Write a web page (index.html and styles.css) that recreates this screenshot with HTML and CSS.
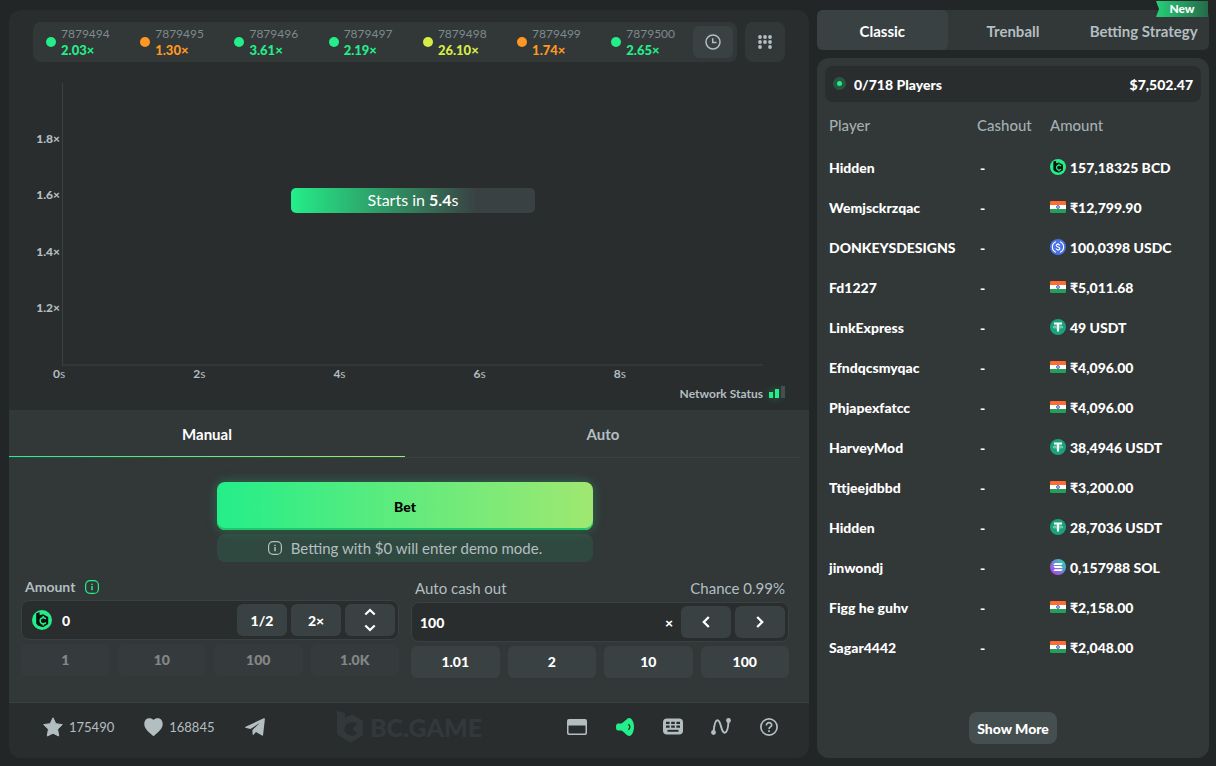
FILE: index.html
```html
<!DOCTYPE html>
<html lang="en">
<head>
<meta charset="utf-8">
<meta name="viewport" content="width=device-width, initial-scale=1">
<title>Crash - BC.GAME</title>
<link rel="stylesheet" href="styles.css">
</head>
<body>
<svg class="sprite" aria-hidden="true">
  <defs>
    <linearGradient id="solFill" x1="0" y1="1" x2="1" y2="0"><stop offset=".1" stop-color="#b83df0"/><stop offset=".5" stop-color="#6f83d8"/><stop offset=".95" stop-color="#1fe0a8"/></linearGradient>
  </defs>
  <symbol id="bcd" viewBox="0 0 20 20">
    <circle cx="10" cy="10" r="10" fill="#24ee89"/>
    <path fill="#0b1210" d="M4.200 3.200 7.600 2.300v3L11 4.300l5.200 2.800v7L11 17.200 5.800 15.400 4.200 13.500z"/>
    <path fill="none" stroke="#24ee89" stroke-width="1.500" d="M13.800 9a3.100 3.100 0 1 0 0 3.500M11.200 5.900v1.800M11.200 13.700v1.800"/>
  </symbol>
  <symbol id="inr" viewBox="0 0 16 12">
    <path fill="#ff6c2d" d="M0 1q0-1 1-1h14q1 0 1 1v3H0z"/><path fill="#fff" d="M0 4h16v4H0z"/><path fill="#249f58" d="M0 8h16v3q0 1-1 1H1q-1 0-1-1z"/>
    <circle cx="8" cy="6" r="1.500" fill="#a9b9f5" stroke="#3d57c9" stroke-width=".8"/>
  </symbol>
  <symbol id="usdc" viewBox="0 0 16 16">
    <circle cx="8" cy="8" r="8" fill="#4a72ea"/>
    <path fill="none" stroke="#fff" stroke-width="1.100" d="M6 2.700a5.700 5.700 0 0 0 0 10.600M10 2.700a5.700 5.700 0 0 1 0 10.600M9.900 6.500C9.700 5 6.200 4.900 6.200 6.600c0 1.700 3.700 1.100 3.700 2.900 0 1.700-3.700 1.600-3.900 0M8 4.300v1.100M8 10.700v1.100"/>
  </symbol>
  <symbol id="usdt" viewBox="0 0 16 16">
    <circle cx="8" cy="8" r="8" fill="#1ba27a"/>
    <path fill="#fff" d="M4 3.600h8v2H9.100v6.900H6.900V5.600H4z"/>
    <ellipse cx="8" cy="8" rx="4.800" ry="1" fill="none" stroke="#d8f2e9" stroke-width=".7"/>
  </symbol>
  <symbol id="sol" viewBox="0 0 16 16">
    <circle cx="8" cy="8" r="8" fill="url(#solFill)"/>
    <path fill="#fff" d="M4.800 4h8l-1.500 1.900h-8zM3.300 7.100h8L12.800 9h-8zM4.800 10.200h8l-1.500 1.900h-8z"/>
  </symbol>
  <symbol id="info" viewBox="0 0 14 14">
    <rect x=".6" y=".6" width="12.800" height="12.800" rx="4.500" fill="none" stroke="currentColor" stroke-width="1.200"/>
    <path fill="none" stroke="currentColor" stroke-width="1.500" d="M7 3.700v1.400M7 6.100v4.200"/>
  </symbol>
</svg>

<main class="page">
  <section class="game">
    <div class="stage">
      <div class="topbar">
        <div class="history">
          <div class="round green"><i class="dot"></i><span class="id">7879494</span><b class="rate">2.03×</b></div>
          <div class="round orange"><i class="dot"></i><span class="id">7879495</span><b class="rate">1.30×</b></div>
          <div class="round green"><i class="dot"></i><span class="id">7879496</span><b class="rate">3.61×</b></div>
          <div class="round green"><i class="dot"></i><span class="id">7879497</span><b class="rate">2.19×</b></div>
          <div class="round yellow"><i class="dot"></i><span class="id">7879498</span><b class="rate">26.10×</b></div>
          <div class="round orange"><i class="dot"></i><span class="id">7879499</span><b class="rate">1.74×</b></div>
          <div class="round latest green"><i class="dot"></i><span class="id">7879500</span><b class="rate">2.65×</b></div>
          <button class="clock" aria-label="History"><svg width="16" height="16" viewBox="0 0 16 16" fill="none" stroke="currentColor" stroke-width="1.500"><circle cx="8" cy="8" r="7"/><path d="M7.700 4.300v4.200h3.800"/></svg></button>
        </div>
        <button class="trends" aria-label="Trends"><svg width="14" height="14" viewBox="0 0 14 14" fill="currentColor"><circle cx="2" cy="2" r="1.900"/><circle cx="7" cy="2" r="1.900"/><circle cx="12" cy="2" r="1.900"/><circle cx="2" cy="7" r="1.900"/><circle cx="7" cy="7" r="1.900"/><circle cx="12" cy="7" r="1.900"/><circle cx="2" cy="12" r="1.900"/><circle cx="12" cy="12" r="1.900"/></svg></button>
      </div>
      <div class="chart">
        <div class="yaxis"><span>1.8×</span><span>1.6×</span><span>1.4×</span><span>1.2×</span></div>
        <div class="plot"><div class="countdown">Starts in <b>5.4</b>s</div></div>
      </div>
      <div class="xaxis"><span><b>0</b>s</span><span><b>2</b>s</span><span><b>4</b>s</span><span><b>6</b>s</span><span><b>8</b>s</span></div>
      <div class="network">Network Status<span class="bars"><i class="low"></i><i class="mid"></i><i class="high"></i></span></div>
    </div>

    <div class="controls">
      <div class="modes" role="tablist">
        <button class="mode active" role="tab" aria-selected="true">Manual</button>
        <button class="mode" role="tab" aria-selected="false">Auto</button>
      </div>
      <div class="action">
        <button class="bet">Bet</button>
        <p class="hint"><svg width="14" height="14"><use href="#info"/></svg>Betting with $0 will enter demo mode.</p>
      </div>
      <div class="fields">
        <div class="field">
          <div class="label strong"><label for="amount">Amount</label><svg class="tip" width="14" height="14"><use href="#info"/></svg></div>
          <div class="box">
            <svg class="coin" width="20" height="20"><use href="#bcd"/></svg>
            <input id="amount" type="text" value="0">
            <button class="key">1/2</button>
            <button class="key">2×</button>
            <button class="key icon" aria-label="Adjust amount"><svg width="12" height="24" viewBox="0 0 12 24" fill="none" stroke="currentColor" stroke-width="2.200"><path d="M1.300 6.500 6 2l4.700 4.500M1.300 17.500 6 22l4.700-4.500"/></svg></button>
          </div>
          <div class="quick">
            <button disabled>1</button><button disabled>10</button><button disabled>100</button><button disabled>1.0K</button>
          </div>
        </div>
        <div class="field">
          <div class="label tall"><label for="cashout">Auto cash out</label><span>Chance 0.99%</span></div>
          <div class="box">
            <input id="cashout" type="text" value="100">
            <span class="times">×</span>
            <button class="key icon" aria-label="Lower"><svg width="8" height="12" viewBox="0 0 8 12" fill="none" stroke="currentColor" stroke-width="2.300"><path d="M6.800 1 1.800 6l5 5"/></svg></button>
            <button class="key icon" aria-label="Higher"><svg width="8" height="12" viewBox="0 0 8 12" fill="none" stroke="currentColor" stroke-width="2.300"><path d="M1.200 1l5 5-5 5"/></svg></button>
          </div>
          <div class="quick">
            <button>1.01</button><button>2</button><button>10</button><button>100</button>
          </div>
        </div>
      </div>
    </div>

    <footer class="foot">
      <div class="social">
        <button class="stat"><svg width="20" height="20" viewBox="0 0 20 20" fill="currentColor" stroke="currentColor" stroke-linejoin="round"><path d="M10 .8l2.800 5.900 6.500.9-4.700 4.600 1.100 6.800L10 16.200 4.300 19l1.100-6.800L.7 7.600l6.500-.9z"/></svg>175490</button>
        <button class="stat"><svg width="19" height="18" viewBox="0 0 19 18" fill="currentColor"><path d="M9.500 2C7.300-.5.3-1 .3 6.300c0 5 5.700 8.500 8 11q1.200 1.200 2.400 0c2.300-2.500 8-6 8-11C18.700-1 11.700-.5 9.500 2z"/></svg>168845</button>
        <button class="stat" aria-label="Share"><svg width="20" height="18" viewBox="0 0 20 18" fill="currentColor"><path d="M0 9 18.800.3q1.200-.4 1.100.8L18.100 17q-.2 1-1.100.5L11 14l-2.500 2.800q-.8.500-.9-.6L7.400 12 15 4.800 5.500 11 .4 9.700z"/></svg></button>
      </div>
      <div class="brand"><svg width="28" height="32" viewBox="0 0 28 32" fill="currentColor"><path fill-rule="evenodd" d="M1 0l8 2v5l6-3q1-.4 2 0l8 4.500q2 1 2 3v11q0 2-2 3l-8 5q-2 1-4 0l-9-5q-3-1.500-3-4zM21 13c-4-4-12.500-1-12.500 5s8.500 9 12.500 4.500L16.500 18z"/></svg><span>BC.GAME</span></div>
      <div class="tools">
        <button class="tool" aria-label="Theatre mode"><svg width="20" height="16" viewBox="0 0 20 16"><path fill="currentColor" fill-rule="evenodd" d="M2 0h16q2 0 2 2v12q0 2-2 2H2q-2 0-2-2V2q0-2 2-2zM1.500 6.500v7q0 1 1 1h15q1 0 1-1v-7z"/></svg></button>
        <button class="tool on" aria-label="Sound"><svg width="20" height="18" viewBox="0 0 20 18"><path fill="currentColor" d="M3 5.500h3.500C9 4 10.500 1.800 12.700.4 17-1.500 19 5 19 9s-2 10.500-6.300 8.600C10.500 16.200 9 14 6.500 12.500H3Q1 12.500 1 9t2-3.500z"/><path fill="none" stroke="#292d2e" stroke-width="1.300" d="M13.400 6.300q3 2.700 0 5.400"/></svg></button>
        <button class="tool" aria-label="Hotkeys"><svg width="20" height="17" viewBox="0 0 20 17"><rect y=".5" width="20" height="16" rx="4" fill="currentColor"/><path fill="none" stroke="#292d2e" stroke-width="2.200" stroke-dasharray="3.600 1.600" d="M3 4.800h14M3 8.600h14"/><path stroke="#292d2e" stroke-width="2" d="M4.500 12.800h11"/></svg></button>
        <button class="tool" aria-label="Live stats"><svg width="20" height="17" viewBox="0 0 20 17"><g fill="currentColor"><circle cx="2.500" cy="14.500" r="2.400"/><circle cx="17.500" cy="2.500" r="2.400"/></g><path fill="none" stroke="currentColor" stroke-width="2" d="M2.500 14C3.200 7 4 2.300 6.400 2.300c4.100 0 3.200 12.500 7.200 12.500 3 0 3.700-6 3.900-12"/></svg></button>
        <button class="tool" aria-label="Help"><svg width="18" height="18" viewBox="0 0 18 18" fill="none" stroke="currentColor" stroke-width="1.700"><circle cx="9" cy="9" r="8.100"/><path d="M6.400 7.500C6.200 3.600 12 4 11.700 7.200c-.2 1.800-2.600 1.700-2.700 3.800M9 12.300v1.700"/></svg></button>
      </div>
    </footer>
  </section>

  <aside class="side">
    <div class="kinds" role="tablist">
      <button class="kind active" role="tab" aria-selected="true">Classic</button>
      <button class="kind" role="tab" aria-selected="false">Trenball</button>
      <button class="kind" role="tab" aria-selected="false">Betting Strategy</button>
      <span class="badge">New</span>
    </div>
    <div class="players">
      <div class="summary"><span class="live"></span><span>0/718 Players</span><span class="total">$7,502.47</span></div>
      <table class="bets">
        <thead><tr><th class="who">Player</th><th class="out">Cashout</th><th>Amount</th></tr></thead>
        <tbody>
          <tr><td>Hidden</td><td class="dash">-</td><td><span class="sum"><svg width="16" height="16"><use href="#bcd"/></svg>157,18325 BCD</span></td></tr>
          <tr><td>Wemjsckrzqac</td><td class="dash">-</td><td><span class="sum"><svg width="16" height="12"><use href="#inr"/></svg>₹12,799.90</span></td></tr>
          <tr><td>DONKEYSDESIGNS</td><td class="dash">-</td><td><span class="sum"><svg width="16" height="16"><use href="#usdc"/></svg>100,0398 USDC</span></td></tr>
          <tr><td>Fd1227</td><td class="dash">-</td><td><span class="sum"><svg width="16" height="12"><use href="#inr"/></svg>₹5,011.68</span></td></tr>
          <tr><td>LinkExpress</td><td class="dash">-</td><td><span class="sum"><svg width="16" height="16"><use href="#usdt"/></svg>49 USDT</span></td></tr>
          <tr><td>Efndqcsmyqac</td><td class="dash">-</td><td><span class="sum"><svg width="16" height="12"><use href="#inr"/></svg>₹4,096.00</span></td></tr>
          <tr><td>Phjapexfatcc</td><td class="dash">-</td><td><span class="sum"><svg width="16" height="12"><use href="#inr"/></svg>₹4,096.00</span></td></tr>
          <tr><td>HarveyMod</td><td class="dash">-</td><td><span class="sum"><svg width="16" height="16"><use href="#usdt"/></svg>38,4946 USDT</span></td></tr>
          <tr><td>Tttjeejdbbd</td><td class="dash">-</td><td><span class="sum"><svg width="16" height="12"><use href="#inr"/></svg>₹3,200.00</span></td></tr>
          <tr><td>Hidden</td><td class="dash">-</td><td><span class="sum"><svg width="16" height="16"><use href="#usdt"/></svg>28,7036 USDT</span></td></tr>
          <tr><td>jinwondj</td><td class="dash">-</td><td><span class="sum"><svg width="16" height="16"><use href="#sol"/></svg>0,157988 SOL</span></td></tr>
          <tr><td>Figg he guhv</td><td class="dash">-</td><td><span class="sum"><svg width="16" height="12"><use href="#inr"/></svg>₹2,158.00</span></td></tr>
          <tr><td>Sagar4442</td><td class="dash">-</td><td><span class="sum"><svg width="16" height="12"><use href="#inr"/></svg>₹2,048.00</span></td></tr>
        </tbody>
      </table>
      <button class="more">Show More</button>
    </div>
  </aside>
</main>
</body>
</html>
```
FILE: styles.css
```css
* { box-sizing: border-box; }
body { margin: 0; background: #232626; color: #fff; font: 14px/20px Lato, "Noto Sans", sans-serif; }
button, input { margin: 0; padding: 0; border: 0; background: none; color: inherit; font: inherit; }
button { display: flex; align-items: center; justify-content: center; cursor: pointer; }
svg { display: block; flex: none; }
.sprite { position: absolute; width: 0; height: 0; }

.page { display: flex; gap: 8px; min-height: 100vh; padding: 10px 7px 8px 9px; }
.game { flex: 1; min-width: 0; display: flex; flex-direction: column; background: #292d2e; border-radius: 12px; overflow: hidden; }

.stage { flex: 1; display: flex; flex-direction: column; padding: 12px 24px 5px; }
.topbar { display: flex; gap: 8px; }
.history { flex: 1; display: flex; align-items: center; height: 40px; padding: 0 4px 0 13px; background: #323738; border-radius: 8px; }
.round { flex: 1; display: grid; grid-template-columns: 10px auto; column-gap: 5px; justify-content: start; align-items: center; }
.round.latest { flex: none; margin-right: 18px; }
.dot { grid-row: span 2; width: 10px; height: 10px; border-radius: 50%; background: currentColor; }
.id { color: #7e8a8e; font-size: 12px; line-height: 17px; }
.rate { font-size: 13px; font-weight: 900; line-height: 17px; }
.green { color: #24ee89; }
.orange { color: #ff9722; }
.yellow { color: #d6ed47; }
.clock { width: 40px; height: 32px; border-radius: 6px; background: #3a4142; color: #b3bec1; }
.trends { width: 40px; height: 40px; border-radius: 8px; background: #323738; color: #b3bec1; }

.chart { flex: 1; display: flex; margin-top: 21px; margin-right: 22px; }
.yaxis { width: 29px; display: flex; flex-direction: column; padding: 28px 2px 30px 0; color: #b3bec1; font-size: 12px; font-weight: 900; }
.yaxis span { flex: 1; display: flex; align-items: center; justify-content: flex-end; }
.plot { flex: 1; display: flex; justify-content: center; align-items: flex-start; border-left: 1px solid #3a4142; border-bottom: 2px solid #323738; }
.countdown { width: 244px; margin-top: 105px; padding: 2px 0 3px; border-radius: 5px; background: linear-gradient(90deg, #24ee89, #3a4142 76%); text-align: center; font-size: 16px; }
.xaxis { display: grid; grid-template-columns: repeat(5, 1fr); margin: 0 31px 0 20px; padding-bottom: 2px; color: #b3bec1; font-size: 12px; line-height: 15px; }
.network { display: flex; align-items: center; justify-content: flex-end; gap: 6px; color: #b3bec1; font-size: 12px; font-weight: 700; line-height: 22px; }
.bars { display: flex; align-items: flex-end; gap: 2px; margin-bottom: 4px; }
.bars i { width: 4px; background: #24ee89; box-shadow: 0 0 8px rgba(36, 238, 137, .4); }
.bars .low { height: 6px; }
.bars .mid { height: 9px; }
.bars .high { height: 12px; background: #464f50; box-shadow: none; }

.controls { background: #323738; padding-bottom: 24px; border-bottom: 1px solid #3a4142; }
.modes { display: flex; margin-right: 8px; border-bottom: 1px solid #3a4142; }
.mode { flex: 1; height: 47px; padding-top: 2px; border-bottom: 1px solid transparent; color: #b3bec1; font-size: 15px; font-weight: 700; }
.mode.active { color: #fff; border-image: linear-gradient(90deg, #24ee89, #9fe871) 1; border-style: solid; border-width: 0 0 1px; }
.action { width: 47%; margin: 24px 0 0 26%; }
.bet { width: 100%; height: 48px; padding-top: 2px; border-radius: 8px; background: linear-gradient(90deg, #24ee89, #9fe871); box-shadow: 0 0 12px rgba(36, 238, 137, .3), inset 0 -2px #1dca6a; color: #000; font-weight: 900; }
.hint { display: flex; align-items: center; justify-content: center; gap: 9px; margin: 4px 0 0; height: 28px; border-radius: 8px; background: rgba(36, 238, 137, .1); color: #b3bec1; font-size: 15px; }
.fields { display: flex; align-items: flex-start; gap: 12px; padding: 12px 20px 0 12px; }
.field { flex: 1; min-width: 0; }
.label { display: flex; align-items: center; gap: 10px; height: 26px; padding: 0 4px; color: #b3bec1; }
.label.strong { font-weight: 700; }
.label.tall { height: 28px; justify-content: space-between; font-size: 15px; }
.tip { color: #24ee89; }
.box { display: flex; align-items: center; gap: 4px; height: 40px; padding: 0 3px 0 8px; border: 1px solid #3a4142; border-radius: 8px; background: #292d2e; font-weight: 900; }
.box input { flex: 1; min-width: 0; padding-top: 2px; outline: 0; }
.coin { margin: 0 6px 0 2px; }
.times { margin-right: 4px; padding-top: 2px; }
.key { width: 50px; height: 32px; padding-top: 2px; border-radius: 6px; background: #3a4142; }
.key.icon { padding-top: 0; }
.quick { display: grid; grid-template-columns: repeat(4, 1fr); gap: 8px; margin-top: 4px; }
.quick button { height: 32px; border-radius: 6px; background: #3a4142; font-weight: 900; }
.quick button:disabled { opacity: .4; }

.foot { display: flex; align-items: center; height: 55px; padding: 0 30px 8px 34px; color: #b3bec1; font-size: 13px; }
.social { display: flex; align-items: center; flex: 1; gap: 30px; }
.stat { gap: 6px; }
.brand { display: flex; align-items: center; gap: 6px; margin-right: 4px; color: #33393b; font-size: 25px; font-weight: 900; line-height: 32px; }
.tools { display: flex; flex: 1; justify-content: flex-end; gap: 28px; }
.tool { width: 20px; height: 20px; }
.tool.on { color: #24ee89; }

.side { width: 392px; display: flex; flex-direction: column; gap: 8px; }
.kinds { position: relative; display: grid; grid-template-columns: repeat(3, 1fr); height: 40px; border-radius: 6px; background: #323738; }
.kind { padding-top: 2px; border-radius: 6px; color: #b3bec1; font-size: 15px; font-weight: 700; white-space: nowrap; }
.kind.active { background: #3a4142; color: #fff; }
.badge { position: absolute; top: -9px; right: 1px; width: 52px; background: linear-gradient(90deg, #25cf78, #256b49); clip-path: polygon(0 0, 100% 0, 100% 100%, 0 100%, 3px 50%); text-align: center; font-size: 12px; font-weight: 900; line-height: 16px; }
.players { flex: 1; display: flex; flex-direction: column; padding: 8px 8px 14px; border-radius: 12px; background: #323738; }
.summary { display: flex; align-items: center; gap: 8px; height: 36px; padding: 2px 8px 0; border-radius: 8px; background: #292d2e; font-weight: 900; }
.live { width: 13px; height: 13px; margin-bottom: 3px; border: 4px solid #285641; border-radius: 50%; background: #24ee89; }
.total { margin-left: auto; }
.bets { width: 100%; border-collapse: collapse; table-layout: fixed; text-align: left; font-weight: 900; }
.bets th { height: 46px; padding: 0 0 0 4px; color: #a3afb2; font-size: 15px; font-weight: 500; }
.bets td { height: 40px; padding: 0 0 0 4px; white-space: nowrap; }
.bets .who { width: 148px; }
.bets .out { width: 73px; }
.bets .dash { padding-left: 7px; }
.sum { display: flex; align-items: center; gap: 4px; }
.sum svg { margin-bottom: 2px; }
.more { align-self: center; width: 88px; height: 32px; margin-top: auto; padding-top: 2px; border-radius: 8px; background: #464f50; font-weight: 900; }
```
